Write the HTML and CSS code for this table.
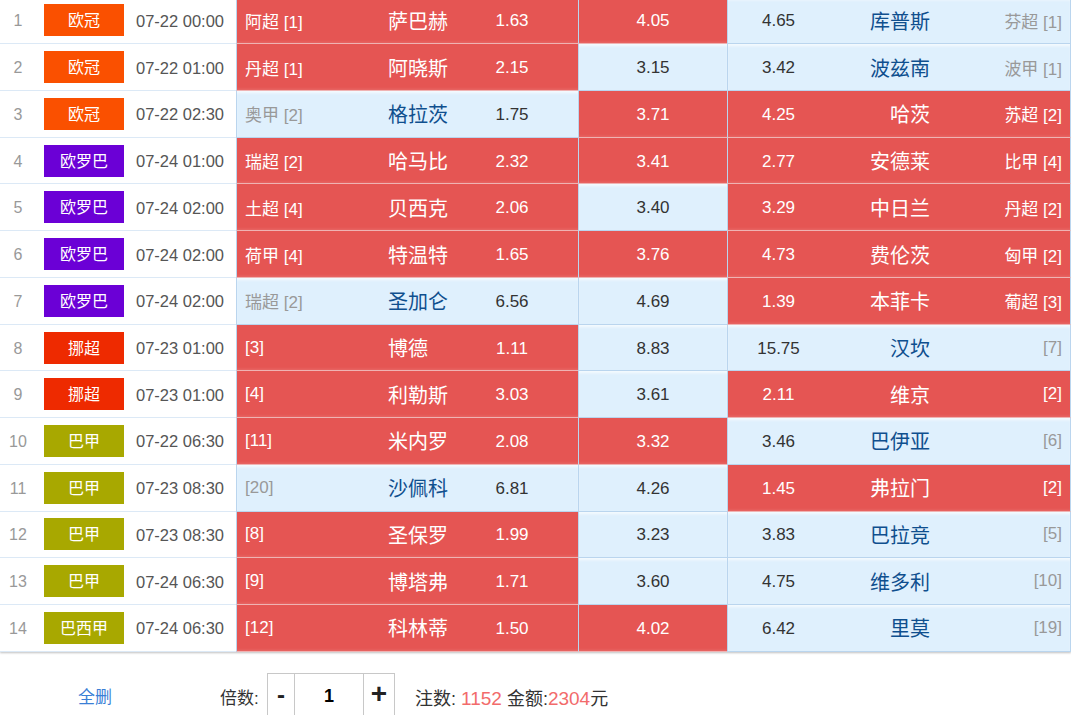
FILE: index.html
```html
<!DOCTYPE html>
<html lang="zh-CN">
<head>
<meta charset="utf-8">
<title>投注</title>
<link rel="stylesheet" href="styles.css">
</head>
<body>
<div class="table">
  <div class="row"><div class="c-idx">1</div><div class="c-lg"><span class="badge ucl">欧冠</span></div><div class="c-time">07-22 00:00</div>
    <div class="home on"><span class="lg">阿超 [1]</span><span class="tm">萨巴赫</span><span class="od">1.63</span></div><div class="draw on">4.05</div><div class="away"><span class="od">4.65</span><span class="tm">库普斯</span><span class="lg">芬超 [1]</span></div></div>
  <div class="row"><div class="c-idx">2</div><div class="c-lg"><span class="badge ucl">欧冠</span></div><div class="c-time">07-22 01:00</div>
    <div class="home on"><span class="lg">丹超 [1]</span><span class="tm">阿晓斯</span><span class="od">2.15</span></div><div class="draw">3.15</div><div class="away"><span class="od">3.42</span><span class="tm">波兹南</span><span class="lg">波甲 [1]</span></div></div>
  <div class="row"><div class="c-idx">3</div><div class="c-lg"><span class="badge ucl">欧冠</span></div><div class="c-time">07-22 02:30</div>
    <div class="home"><span class="lg">奥甲 [2]</span><span class="tm">格拉茨</span><span class="od">1.75</span></div><div class="draw on">3.71</div><div class="away on"><span class="od">4.25</span><span class="tm">哈茨</span><span class="lg">苏超 [2]</span></div></div>
  <div class="row"><div class="c-idx">4</div><div class="c-lg"><span class="badge uel">欧罗巴</span></div><div class="c-time">07-24 01:00</div>
    <div class="home on"><span class="lg">瑞超 [2]</span><span class="tm">哈马比</span><span class="od">2.32</span></div><div class="draw on">3.41</div><div class="away on"><span class="od">2.77</span><span class="tm">安德莱</span><span class="lg">比甲 [4]</span></div></div>
  <div class="row"><div class="c-idx">5</div><div class="c-lg"><span class="badge uel">欧罗巴</span></div><div class="c-time">07-24 02:00</div>
    <div class="home on"><span class="lg">土超 [4]</span><span class="tm">贝西克</span><span class="od">2.06</span></div><div class="draw">3.40</div><div class="away on"><span class="od">3.29</span><span class="tm">中日兰</span><span class="lg">丹超 [2]</span></div></div>
  <div class="row"><div class="c-idx">6</div><div class="c-lg"><span class="badge uel">欧罗巴</span></div><div class="c-time">07-24 02:00</div>
    <div class="home on"><span class="lg">荷甲 [4]</span><span class="tm">特温特</span><span class="od">1.65</span></div><div class="draw on">3.76</div><div class="away on"><span class="od">4.73</span><span class="tm">费伦茨</span><span class="lg">匈甲 [2]</span></div></div>
  <div class="row"><div class="c-idx">7</div><div class="c-lg"><span class="badge uel">欧罗巴</span></div><div class="c-time">07-24 02:00</div>
    <div class="home"><span class="lg">瑞超 [2]</span><span class="tm">圣加仑</span><span class="od">6.56</span></div><div class="draw">4.69</div><div class="away on"><span class="od">1.39</span><span class="tm">本菲卡</span><span class="lg">葡超 [3]</span></div></div>
  <div class="row"><div class="c-idx">8</div><div class="c-lg"><span class="badge nor">挪超</span></div><div class="c-time">07-23 01:00</div>
    <div class="home on"><span class="lg">[3]</span><span class="tm">博德</span><span class="od">1.11</span></div><div class="draw">8.83</div><div class="away"><span class="od">15.75</span><span class="tm">汉坎</span><span class="lg">[7]</span></div></div>
  <div class="row"><div class="c-idx">9</div><div class="c-lg"><span class="badge nor">挪超</span></div><div class="c-time">07-23 01:00</div>
    <div class="home on"><span class="lg">[4]</span><span class="tm">利勒斯</span><span class="od">3.03</span></div><div class="draw">3.61</div><div class="away on"><span class="od">2.11</span><span class="tm">维京</span><span class="lg">[2]</span></div></div>
  <div class="row"><div class="c-idx">10</div><div class="c-lg"><span class="badge bra">巴甲</span></div><div class="c-time">07-22 06:30</div>
    <div class="home on"><span class="lg">[11]</span><span class="tm">米内罗</span><span class="od">2.08</span></div><div class="draw on">3.32</div><div class="away"><span class="od">3.46</span><span class="tm">巴伊亚</span><span class="lg">[6]</span></div></div>
  <div class="row"><div class="c-idx">11</div><div class="c-lg"><span class="badge bra">巴甲</span></div><div class="c-time">07-23 08:30</div>
    <div class="home"><span class="lg">[20]</span><span class="tm">沙佩科</span><span class="od">6.81</span></div><div class="draw">4.26</div><div class="away on"><span class="od">1.45</span><span class="tm">弗拉门</span><span class="lg">[2]</span></div></div>
  <div class="row"><div class="c-idx">12</div><div class="c-lg"><span class="badge bra">巴甲</span></div><div class="c-time">07-23 08:30</div>
    <div class="home on"><span class="lg">[8]</span><span class="tm">圣保罗</span><span class="od">1.99</span></div><div class="draw">3.23</div><div class="away"><span class="od">3.83</span><span class="tm">巴拉竞</span><span class="lg">[5]</span></div></div>
  <div class="row"><div class="c-idx">13</div><div class="c-lg"><span class="badge bra">巴甲</span></div><div class="c-time">07-24 06:30</div>
    <div class="home on"><span class="lg">[9]</span><span class="tm">博塔弗</span><span class="od">1.71</span></div><div class="draw">3.60</div><div class="away"><span class="od">4.75</span><span class="tm">维多利</span><span class="lg">[10]</span></div></div>
  <div class="row"><div class="c-idx">14</div><div class="c-lg"><span class="badge bra">巴西甲</span></div><div class="c-time">07-24 06:30</div>
    <div class="home on"><span class="lg">[12]</span><span class="tm">科林蒂</span><span class="od">1.50</span></div><div class="draw on">4.02</div><div class="away"><span class="od">6.42</span><span class="tm">里莫</span><span class="lg">[19]</span></div></div>
</div>
<div class="footer">
  <a class="clear">全删</a>
  <span class="mul-label">倍数:</span>
  <div class="stepper"><span class="btn minus">-</span><span class="val">1</span><span class="btn plus">+</span></div>
  <div class="summary">注数: <span class="num">1152</span> 金额:<span class="num">2304</span>元</div>
</div>
</body>
</html>
```
FILE: styles.css
```css
* { box-sizing: border-box; }
html, body { margin: 0; padding: 0; background: #fff; overflow: hidden; }
body {
  width: 1071px;
  height: 715px;
  font-family: "Liberation Sans", "Noto Sans CJK SC", sans-serif;
  color: #333;
}
.table {
  margin-top: -2.4px;
  box-shadow: 0 1px 2px rgba(0,0,0,0.25);
}
.row {
  display: grid;
  grid-template-columns: 36px 96px 104px 342px 149px 344px;
  height: 46.73px;
}
.row > div {
  border-bottom: 1px solid #dce9f6;
  display: flex;
  align-items: center;
}
.c-idx { justify-content: center; font-size: 16px; color: #999; padding-top: 2px; }
.c-lg { justify-content: center; }
.badge {
  width: 80px; height: 32px;
  display: flex; align-items: center; justify-content: center;
  color: #fff; font-size: 16px; padding-bottom: 2px;
}
.ucl { background: #fa5000; }
.uel { background: #6b00d6; }
.nor { background: #ee2a00; }
.bra { background: #a8a800; }
.c-time { justify-content: center; font-size: 16.5px; color: #555; padding-right: 8px; padding-top: 2px; }

.home, .draw, .away {
  background: #dff0fd;
  border-left: 1px solid #bad5ee;
  box-shadow: inset 0 3px 3px -1px rgba(255,255,255,0.7);
}
.row > .home, .row > .draw, .row > .away { border-bottom-color: #bad5ee; }
.away { border-right: 1px solid #bad5ee; }
.on {
  background: #e55553;
  box-shadow: inset 0 -3px 3px -2px rgba(255,255,255,0.12);
}
.row > .on { border-bottom-color: #efb3b3; }
.lg { color: #999; font-size: 17px; }
.tm { color: #0f4f8e; font-size: 20px; }
.od { color: #333; font-size: 17px; padding-top: 2px; }
.on .lg, .on .tm, .on .od, .draw.on { color: #fff; }

.home { padding-left: 8px; }
.home .lg { width: 143px; }
.home .tm { width: 80px; }
.home .od { width: 88px; text-align: center; }
.draw { justify-content: center; font-size: 17px; color: #333; padding-top: 2px; }
.away .od { width: 101px; text-align: center; }
.away .tm { width: 101px; text-align: right; }
.away .lg { flex: 1; text-align: right; padding-right: 8px; }

.footer {
  display: flex;
  align-items: center;
  height: 46px;
  margin-top: 21px;
}
.clear { color: #3b7fd6; font-size: 17px; width: 190px; text-align: center; }
.mul-label { font-size: 17px; color: #333; margin-left: 30px; width: 47px; padding-top: 2px; }
.stepper {
  display: flex;
  height: 46px;
  border: 1px solid #c8c8c8;
}
.stepper .btn {
  display: flex; align-items: center; justify-content: center;
  font-weight: bold; color: #222;
}
.minus { width: 27px; border-right: 1px solid #c8c8c8; font-size: 24px; padding-bottom: 2px; }
.val { width: 68px; display: flex; align-items: center; justify-content: center; font-weight: bold; font-size: 18px; color: #000; padding-top: 2px; }
.plus { width: 31px; border-left: 1px solid #c8c8c8; font-size: 28px; padding-bottom: 4px; }
.summary { margin-left: 20px; font-size: 18px; color: #333; padding-top: 2px; }
.summary .num { color: #f26b6b; font-size: 19px; }
```
